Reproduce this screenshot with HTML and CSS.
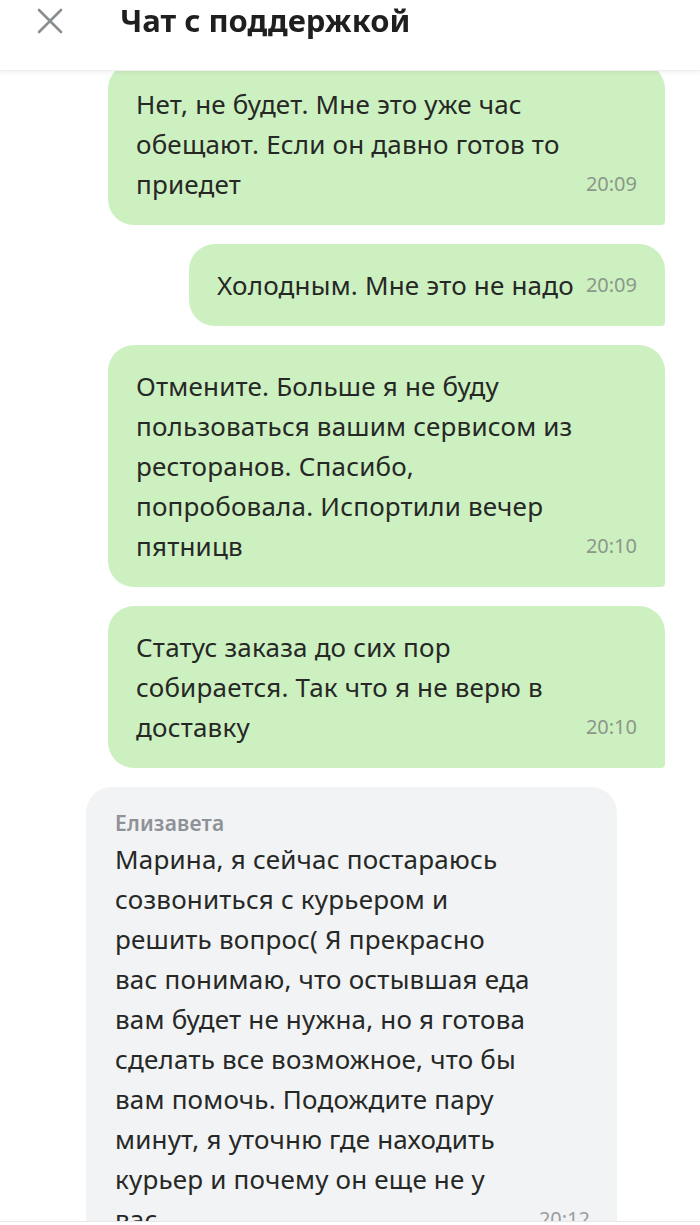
FILE: index.html
```html
<!DOCTYPE html>
<html lang="ru">
<head>
  <meta charset="UTF-8" />
  <meta name="viewport" content="width=device-width, initial-scale=1.0"/>
  <title>Чат с поддержкой</title>
  <link rel="stylesheet" href="styles.css">
</head>
<body>
  <header class="topbar">
    <button class="close-btn" aria-label="Закрыть">
      <svg width="26" height="26" viewBox="0 0 26 26">
        <path d="M2 2 L24 24 M24 2 L2 24" stroke="#8b8e91" stroke-width="2.6" stroke-linecap="round" fill="none"/>
      </svg>
    </button>
    <h1>Чат с поддержкой</h1>
  </header>

  <main class="chat">
    <div class="msg out full">
      <div class="text">Нет, не будет. Мне это уже час<br>обещают. Если он давно готов то<br>приедет</div>
      <span class="time">20:09</span>
    </div>

    <div class="msg out">
      <div class="text">Холодным. Мне это не надо</div>
      <span class="time">20:09</span>
    </div>

    <div class="msg out full">
      <div class="text">Отмените. Больше я не буду<br>пользоваться вашим сервисом из<br>ресторанов. Спасибо,<br>попробовала. Испортили вечер<br>пятницв</div>
      <span class="time">20:10</span>
    </div>

    <div class="msg out full">
      <div class="text">Статус заказа до сих пор<br>собирается. Так что я не верю в<br>доставку</div>
      <span class="time">20:10</span>
    </div>

    <div class="msg in">
      <div class="author">Елизавета</div>
      <div class="body">
        <div class="text">Марина, я сейчас постараюсь<br>созвониться с курьером и<br>решить вопрос( Я прекрасно<br>вас понимаю, что остывшая еда<br>вам будет не нужна, но я готова<br>сделать все возможное, что бы<br>вам помочь. Подождите пару<br>минут, я уточню где находить<br>курьер и почему он еще не у<br>вас</div>
        <span class="time">20:12</span>
      </div>
    </div>
  </main>

  <div class="composer"></div>
</body>
</html>
```

FILE: styles.css
```css
body {
  margin: 0;
  background: #ffffff;
  color: #262826;
  font-family: 'Noto Sans', 'Open Sans', sans-serif;
  overflow: hidden;
}
.topbar {
  position: fixed;
  top: 0;
  left: 0;
  right: 0;
  height: 70px;
  background: #ffffff;
  box-shadow: 0 2px 4px rgba(0,0,0,0.06);
  border-bottom: 1px solid #efefef;
  display: flex;
  align-items: flex-start;
  z-index: 2;
}
.close-btn {
  border: none;
  background: none;
  padding: 0;
  margin: 8px 0 0 37px;
  width: 26px;
  height: 26px;
  cursor: pointer;
}
.topbar h1 {
  margin: 0 0 0 57px;
  font-size: 31px;
  font-weight: 700;
  line-height: 40px;
  color: #1e1f1e;
}
.chat {
  display: flex;
  flex-direction: column;
  align-items: flex-end;
  gap: 19px;
  padding: 63px 35px 0 86px;
}
.msg {
  box-sizing: border-box;
  max-width: 557px;
  padding: 21px 28px 21px;
  border-radius: 26px 26px 4px 26px;
  font-size: 26px;
  line-height: 40px;
  letter-spacing: 0.2px;
  display: flex;
  align-items: flex-end;
  justify-content: space-between;
  gap: 12px;
}
.text {
  white-space: nowrap;
}
.msg.out {
  background: #cdf0c1;
}
.msg.full {
  width: 557px;
}
.time {
  font-size: 20px;
  line-height: 40px;
  letter-spacing: 0;
  color: #8c978a;
  white-space: nowrap;
}
.msg.in {
  align-self: flex-start;
  width: 531px;
  max-width: none;
  background: #f2f3f5;
  border-radius: 26px 26px 26px 4px;
  flex-direction: column;
  align-items: stretch;
  gap: 0;
  padding: 20px 27px 21px 29px;
}
.author {
  font-size: 21px;
  font-weight: 600;
  line-height: 32px;
  color: #8e9196;
}
.body {
  display: flex;
  align-items: flex-end;
  justify-content: space-between;
}
.msg.in .time {
  color: #9a9da1;
}
.composer {
  position: fixed;
  left: 0;
  right: 0;
  bottom: 0;
  height: 3px;
  background: #ffffff;
  border-top: 1px solid #e8e8e8;
}
```
